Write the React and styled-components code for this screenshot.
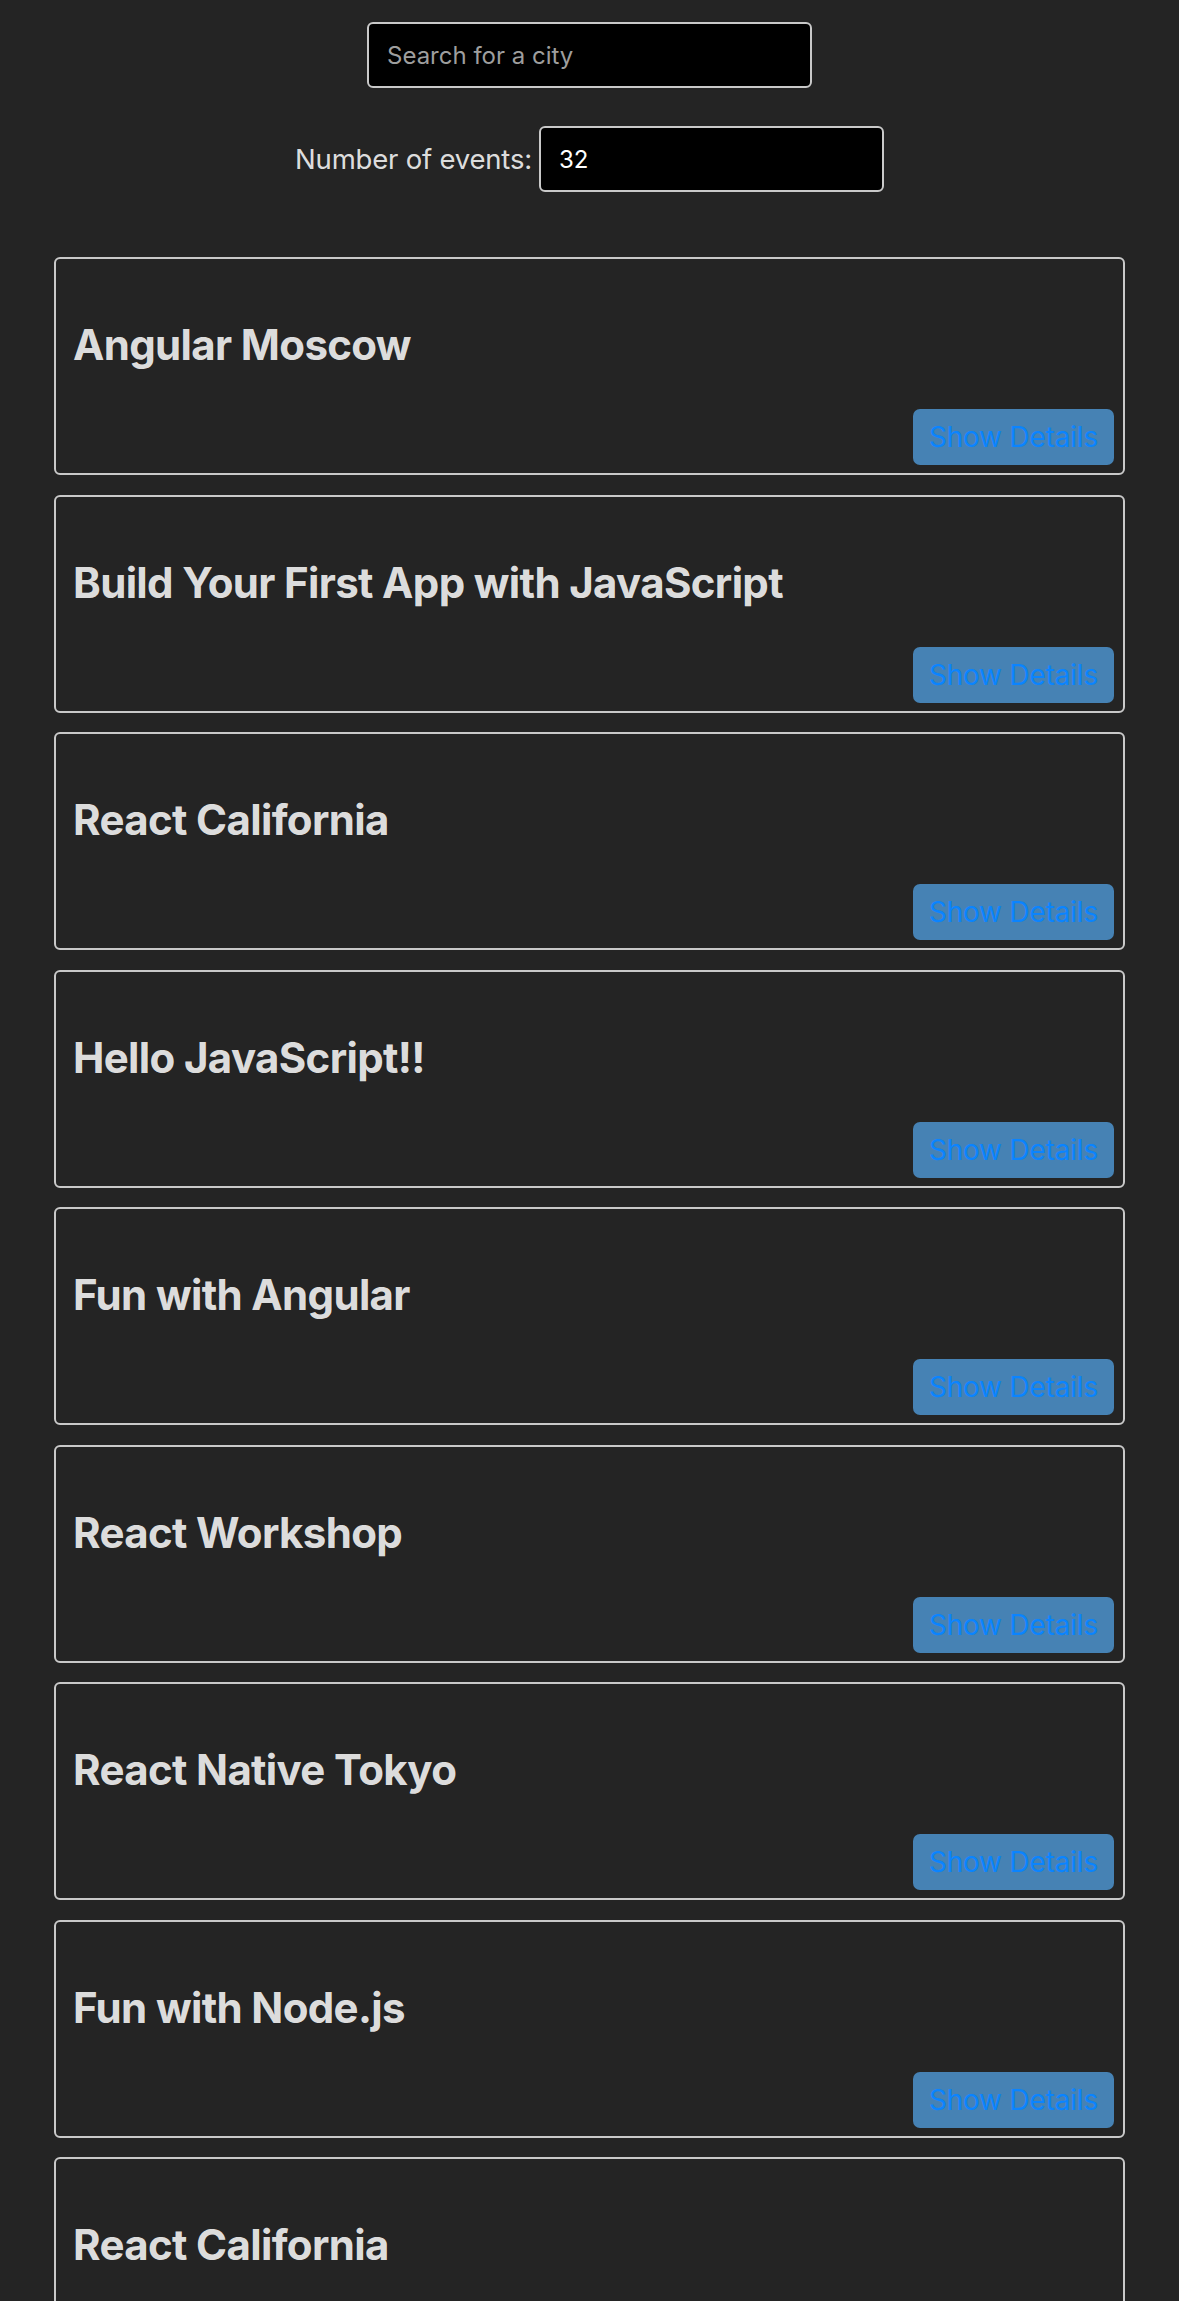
import React, { useState } from 'react'
import styled, { createGlobalStyle } from 'styled-components'

const events = [
  { id: 1, summary: 'Angular Moscow' },
  { id: 2, summary: 'Build Your First App with JavaScript' },
  { id: 3, summary: 'React California' },
  { id: 4, summary: 'Hello JavaScript!!' },
  { id: 5, summary: 'Fun with Angular' },
  { id: 6, summary: 'React Workshop' },
  { id: 7, summary: 'React Native Tokyo' },
  { id: 8, summary: 'Fun with Node.js' },
  { id: 9, summary: 'React California' }
]

const GlobalStyle = createGlobalStyle`
  body {
    margin: 0;
    background: #242424;
    color: rgba(255, 255, 255, 0.87);
    font-family: Inter, 'Noto Sans', sans-serif;
  }
`

const Event = ({ event }) => {
  const [open, setOpen] = useState(false)

  return (
    <Card>
      <Title>{event.summary}</Title>
      <DetailsButton onClick={() => setOpen(!open)}>
        {open ? 'Hide Details' : 'Show Details'}
      </DetailsButton>
    </Card>
  )
}

const App = () => {
  const [city, setCity] = useState('')
  const [count, setCount] = useState('32')

  return (
    <Page>
      <GlobalStyle />
      <SearchInput
        type='text'
        value={city}
        placeholder='Search for a city'
        onChange={e => setCity(e.target.value)}
      />
      <NumberRow>
        <Label htmlFor='number-of-events'>Number of events:</Label>
        <NumberInput
          id='number-of-events'
          type='text'
          value={count}
          onChange={e => setCount(e.target.value)}
        />
      </NumberRow>
      <EventList>
        {events.slice(0, Number(count) || 0).map(event => (
          <Event key={event.id} event={event} />
        ))}
      </EventList>
    </Page>
  )
}

const Page = styled.div`
  padding-top: 22px;
`

const BaseInput = styled.input`
  box-sizing: border-box;
  height: 66px;
  padding: 0 18px;
  background: #000;
  border: 2px solid #c9c9c9;
  border-radius: 6px;
  color: #fff;
  font-family: Inter, sans-serif;
  font-size: 24px;
  outline: none;
  &::placeholder {
    color: #9e9e9e;
  }
`

const SearchInput = styled(BaseInput)`
  display: block;
  width: 445px;
  margin: 0 auto;
`

const NumberRow = styled.div`
  display: flex;
  justify-content: center;
  align-items: center;
  gap: 7px;
  margin-top: 38px;
`

const Label = styled.label`
  font-size: 27.5px;
  letter-spacing: -0.2px;
  color: rgba(255, 255, 255, 0.87);
`

const NumberInput = styled(BaseInput)`
  width: 345px;
`

const EventList = styled.ul`
  display: flex;
  flex-direction: column;
  gap: 19.5px;
  margin: 65px 0 0;
  padding: 0 54px;
  list-style: none;
`

const Card = styled.li`
  display: flex;
  flex-direction: column;
  padding: 0 9px 8px 17px;
  border: 2px solid #c9c9c9;
  border-radius: 6px;
`

const Title = styled.h2`
  margin: 60px 0 39px;
  font-size: 42px;
  line-height: 51px;
  font-weight: 700;
  letter-spacing: -0.65px;
  color: rgba(255, 255, 255, 0.87);
`

const DetailsButton = styled.button`
  align-self: flex-end;
  height: 56px;
  padding: 0 16px;
  background: #4682b4;
  border: none;
  border-radius: 7px;
  color: #0a84ff;
  font-family: Inter, sans-serif;
  font-size: 28px;
  letter-spacing: -0.2px;
  cursor: pointer;
`

export default App
